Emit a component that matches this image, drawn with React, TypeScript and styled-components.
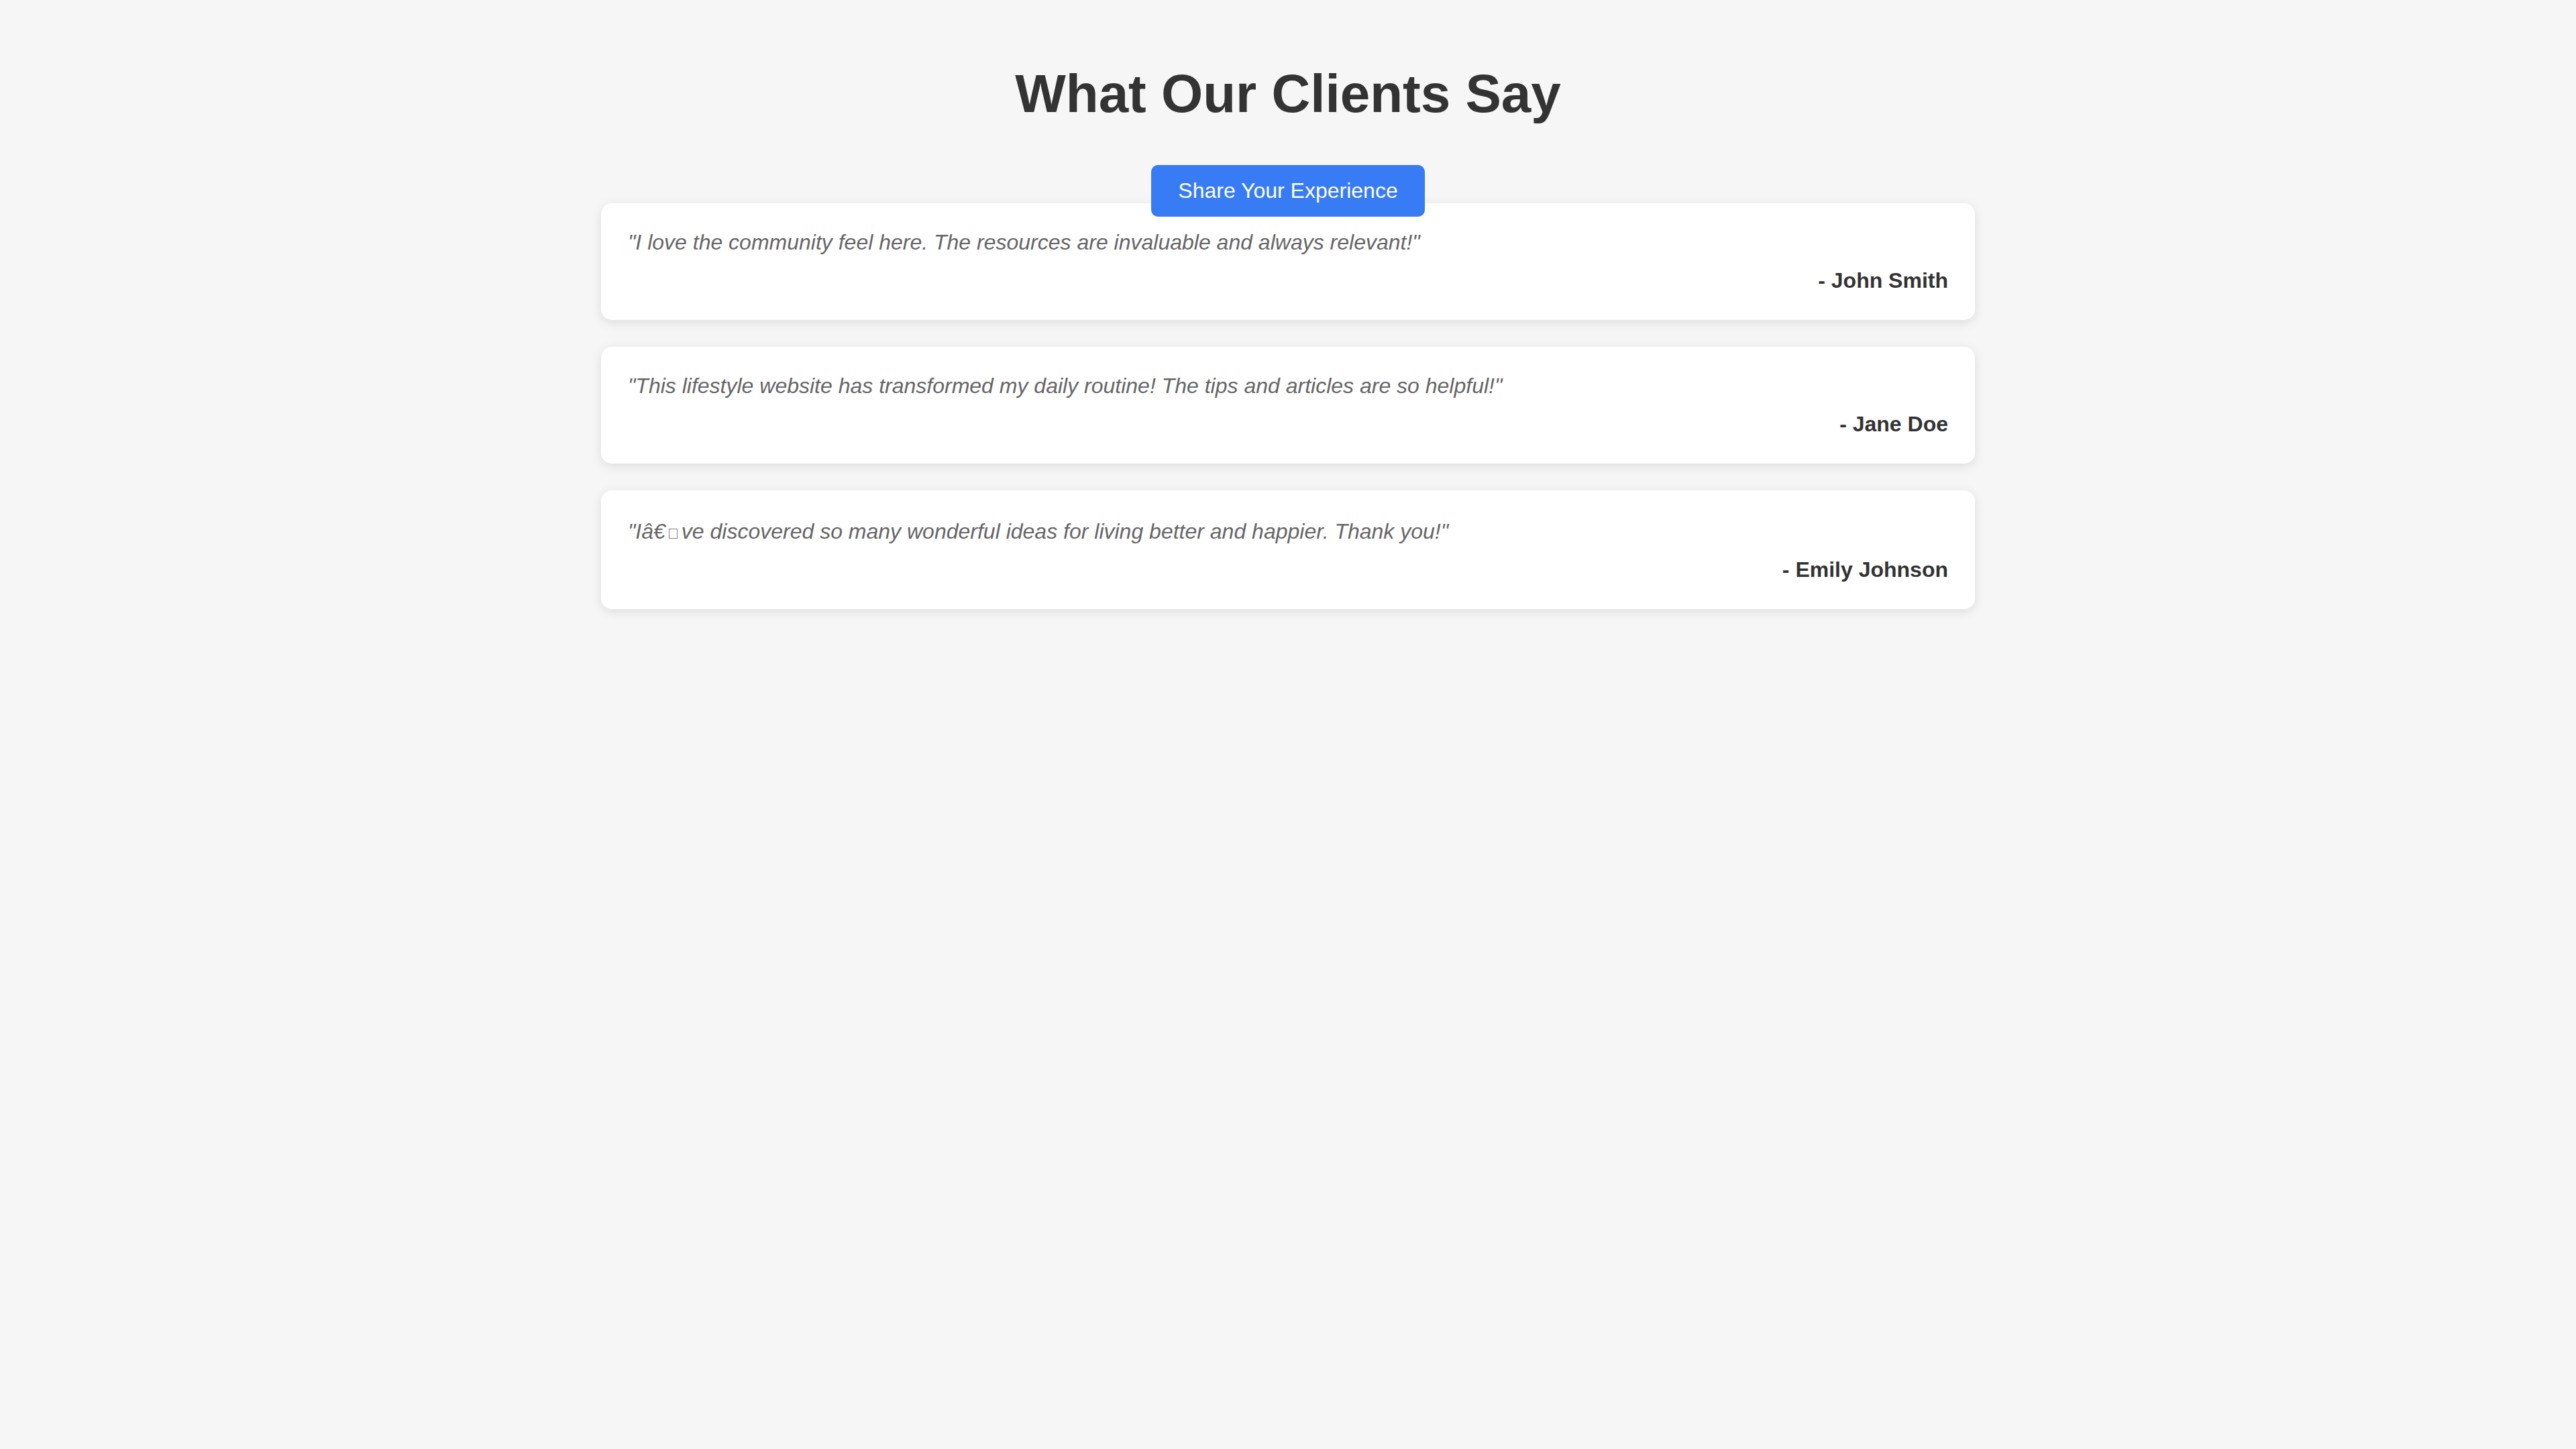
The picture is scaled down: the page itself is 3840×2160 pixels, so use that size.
import React from "react";
import styled, { createGlobalStyle } from "styled-components";

const GlobalStyle = createGlobalStyle`
  html, body {
    margin: 0;
    padding: 0;
    background: #f6f6f6;
  }
  body {
    font-family: "Liberation Sans", Arial, Helvetica, sans-serif;
    color: #333333;
  }
`;

const Page = styled.main`
  padding: 40px;
  min-height: 100vh;
  box-sizing: border-box;
`;

const Container = styled.div`
  max-width: 2048px;
  margin: 0 auto;
  display: flex;
  flex-direction: column;
`;

const Title = styled.h1`
  margin: 54px 0 60px;
  text-align: center;
  font-size: 80px;
  font-weight: 700;
  line-height: normal;
  color: #333333;
`;

const ButtonRow = styled.div`
  display: flex;
  justify-content: center;
  margin-bottom: -20px;
  position: relative;
  z-index: 1;
`;

const ShareButton = styled.button`
  font-family: "Liberation Sans", Arial, Helvetica, sans-serif;
  font-size: 32px;
  line-height: normal;
  padding: 20px 40px;
  border: none;
  border-radius: 10px;
  background: #377bf5;
  color: #ffffff;
  cursor: pointer;
`;

const List = styled.section`
  display: flex;
  flex-direction: column;
  gap: 40px;
`;

const Card = styled.article`
  background: #ffffff;
  border-radius: 16px;
  padding: 40px;
  box-shadow: 0 4px 16px rgba(0, 0, 0, 0.1);
`;

const Quote = styled.p`
  margin: 0 0 20px;
  font-size: 32px;
  line-height: normal;
  font-style: italic;
  color: #666666;
`;

/* the missing-glyph box that the broken encoding shows; its fallback
   font makes the line a little taller, mimicked by the top margin */
const Tofu = styled.span`
  display: inline-block;
  box-sizing: border-box;
  width: 13px;
  height: 15px;
  margin: 17px 6px 0 5px;
  border: 1.5px solid #808080;
  vertical-align: baseline;
`;

const Author = styled.p`
  margin: 0;
  font-size: 32px;
  line-height: normal;
  font-weight: 700;
  text-align: right;
  color: #333333;
`;

const testimonials: { quote: React.ReactNode; author: string }[] = [
  {
    quote:
      "\"I love the community feel here. The resources are invaluable and always relevant!\"",
    author: "- John Smith",
  },
  {
    quote:
      "\"This lifestyle website has transformed my daily routine! The tips and articles are so helpful!\"",
    author: "- Jane Doe",
  },
  {
    quote: (
      <>
        {"\"I\u00e2\u20ac"}
        <Tofu aria-hidden="true" />
        {"ve discovered so many wonderful ideas for living better and happier. Thank you!\""}
      </>
    ),
    author: "- Emily Johnson",
  },
];

export default function App() {
  return (
    <>
      <GlobalStyle />
      <Page>
        <Container>
          <Title>What Our Clients Say</Title>
          <ButtonRow>
            <ShareButton type="button">Share Your Experience</ShareButton>
          </ButtonRow>
          <List>
            {testimonials.map((t) => (
              <Card key={t.author}>
                <Quote>{t.quote}</Quote>
                <Author>{t.author}</Author>
              </Card>
            ))}
          </List>
        </Container>
      </Page>
    </>
  );
}
